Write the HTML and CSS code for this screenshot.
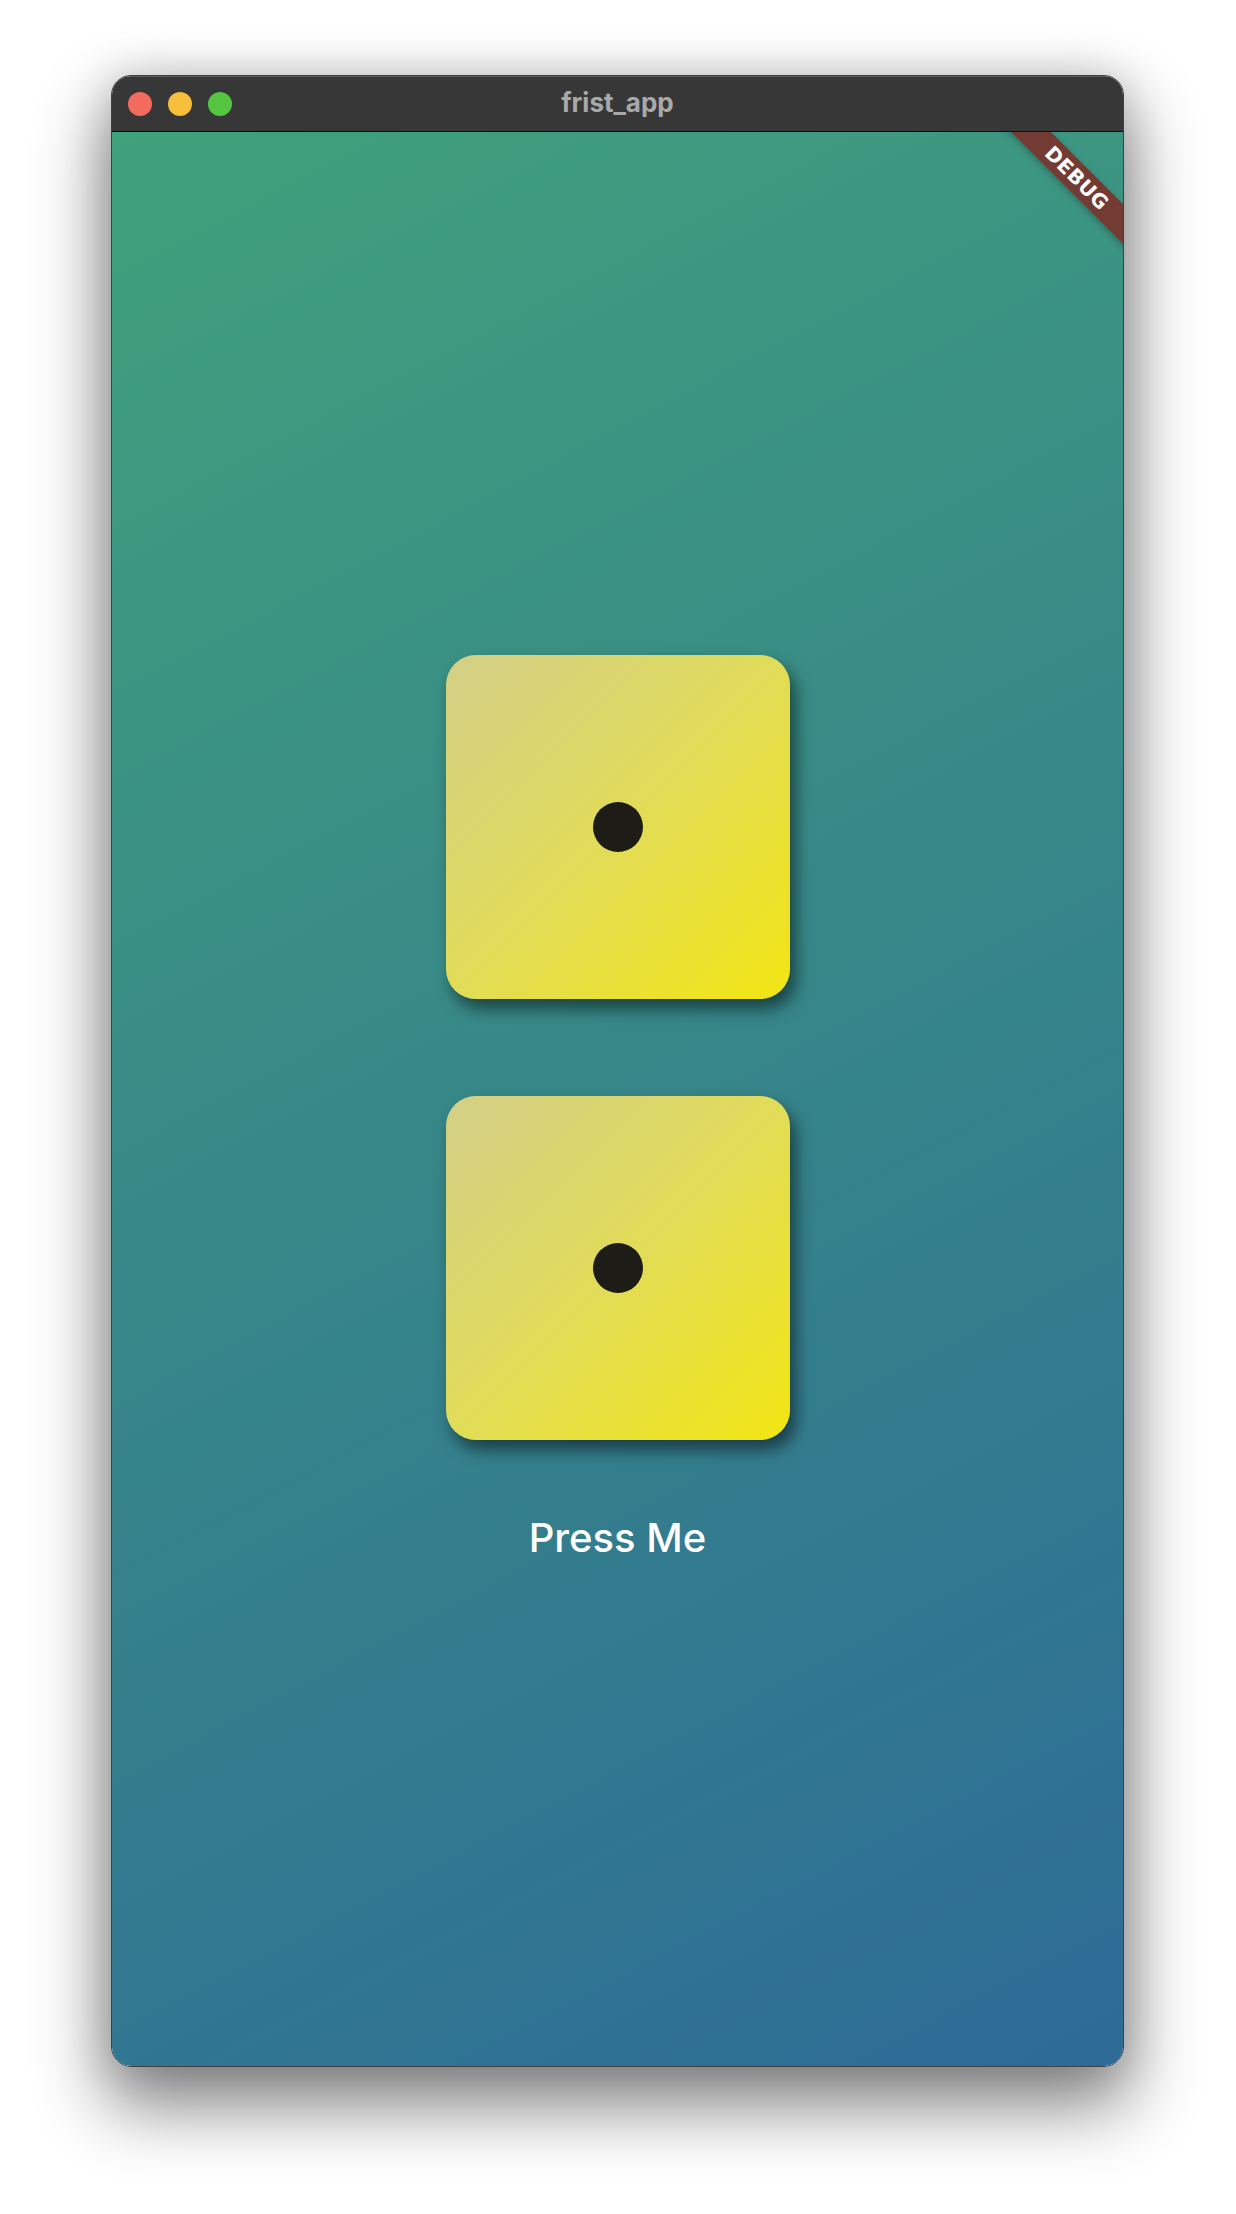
FILE: index.html
```html
<!DOCTYPE html>
<html lang="en">
<head>
<meta charset="utf-8">
<title>frist_app</title>
<link rel="stylesheet" href="styles.css">
</head>
<body>
  <div class="window">
    <div class="titlebar">
      <div class="lights">
        <span class="light red"></span>
        <span class="light yellow"></span>
        <span class="light green"></span>
      </div>
      <div class="title">frist_app</div>
    </div>
    <div class="content">
      <div class="banner">DEBUG</div>
      <div class="die"><span class="pip"></span></div>
      <div class="die"><span class="pip"></span></div>
      <div class="press">Press Me</div>
    </div>
  </div>
</body>
</html>
```

FILE: styles.css
```css
html, body {
  margin: 0;
  padding: 0;
  background: #ffffff;
}

body {
  width: 1236px;
  height: 2214px;
  overflow: hidden;
  padding-top: 75px;
  padding-left: 111px;
  box-sizing: border-box;
}

.window {
  width: 1013px;
  height: 1992px;
  border-radius: 20px;
  border: 1px solid rgba(0, 0, 0, 0.75);
  box-sizing: border-box;
  overflow: hidden;
  display: flex;
  flex-direction: column;
  box-shadow: 0 34px 70px 6px rgba(0, 0, 0, 0.48), 0 0 40px 4px rgba(0, 0, 0, 0.12);
}

.titlebar {
  position: relative;
  height: 56px;
  flex: 0 0 56px;
  box-sizing: border-box;
  background: #373737;
  border-bottom: 1px solid #0e0e0e;
  display: flex;
  align-items: center;
  box-shadow: inset 0 1px 0 rgba(255, 255, 255, 0.18);
}

.lights {
  display: flex;
  gap: 16px;
  padding-left: 16px;
}

.light {
  width: 24px;
  height: 24px;
  border-radius: 50%;
  display: block;
}
.red { background: #f26b5d; }
.yellow { background: #f6be3b; }
.green { background: #56c541; }

.title {
  position: absolute;
  left: 0;
  right: 0;
  top: 0;
  bottom: 0;
  display: flex;
  align-items: center;
  justify-content: center;
  font-family: Inter, "Liberation Sans", sans-serif;
  font-weight: 700;
  font-size: 26px;
  color: #a9a9a9;
  padding-bottom: 2px;
}

.content {
  position: relative;
  flex: 1 1 auto;
  overflow: hidden;
  background: linear-gradient(152.3deg, #40a17b 0%, #2d6b97 100%);
  display: flex;
  flex-direction: column;
  align-items: center;
  padding-top: 523px;
  box-sizing: border-box;
}

.banner {
  position: absolute;
  top: 32px;
  right: -44px;
  width: 180px;
  height: 28px;
  transform: rotate(45deg);
  background: #723c34;
  color: #ffffff;
  font-family: "DejaVu Sans", "Liberation Sans", sans-serif;
  font-weight: 900;
  font-size: 20px;
  letter-spacing: 0.5px;
  display: flex;
  align-items: center;
  justify-content: center;
  box-shadow: 0 2px 6px rgba(0, 0, 0, 0.25);
}

.die {
  width: 344px;
  height: 344px;
  border-radius: 30px;
  background: linear-gradient(135deg, #d3cf88 0%, #e1dc58 50%, #f2e512 100%);
  box-shadow: 6px 10px 16px rgba(0, 0, 0, 0.5);
  display: flex;
  align-items: center;
  justify-content: center;
}

.die + .die {
  margin-top: 97px;
}

.pip {
  width: 50px;
  height: 50px;
  border-radius: 50%;
  background: #1e1c17;
  display: block;
}

.press {
  margin-top: 75px;
  font-family: Inter, "Noto Sans", sans-serif;
  font-size: 40px;
  font-weight: 500;
  color: #ffffff;
  line-height: 46px;
}
```
